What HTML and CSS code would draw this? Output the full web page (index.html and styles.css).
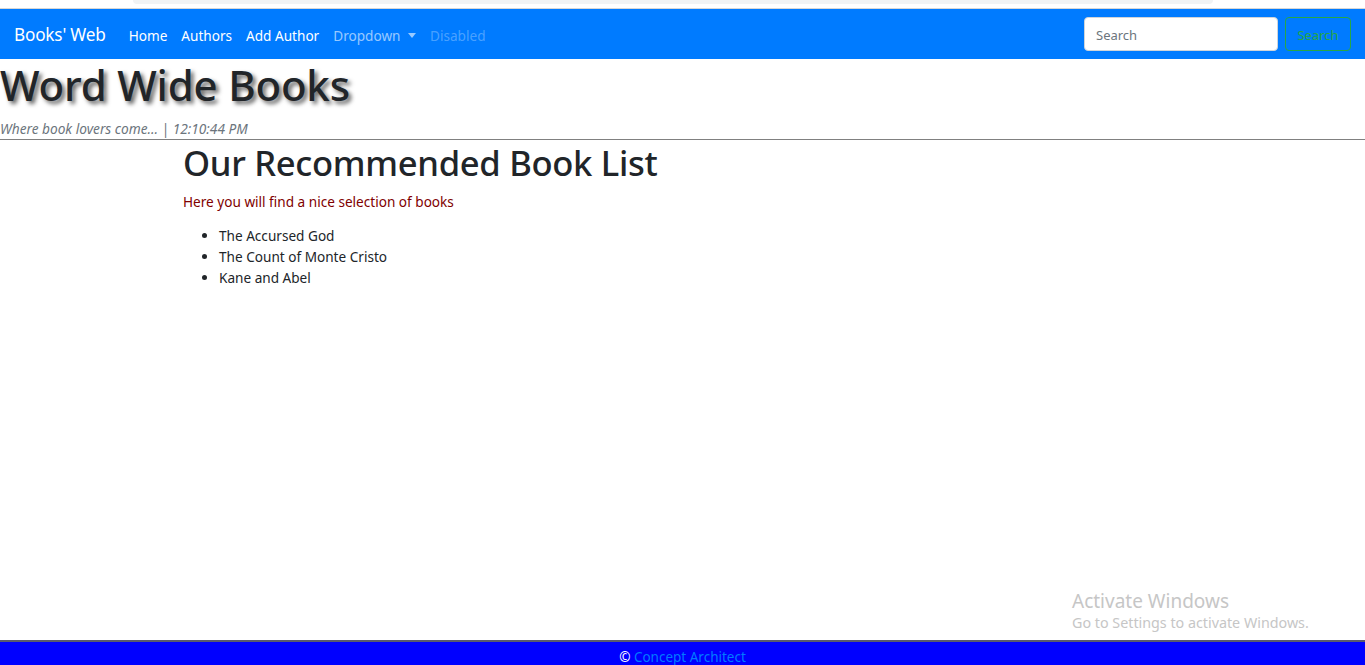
FILE: index.html
```html
<!DOCTYPE html>
<html lang="en">
<head>
<meta charset="utf-8">
<title>Books' Web</title>
<link rel="stylesheet" href="styles.css">
</head>
<body>
<div class="chrome"><div class="chrome-bar"></div></div>
<nav class="navbar">
  <a class="brand" href="#">Books' Web</a>
  <ul class="nav-links">
    <li><a class="nav-link" href="#">Home</a></li>
    <li><a class="nav-link" href="#">Authors</a></li>
    <li><a class="nav-link" href="#">Add Author</a></li>
    <li><a class="nav-link muted" href="#">Dropdown <span class="caret"></span></a></li>
    <li><a class="nav-link disabled" href="#">Disabled</a></li>
  </ul>
  <form class="search">
    <input class="search-input" type="text" placeholder="Search">
    <button class="search-btn" type="button">Search</button>
  </form>
</nav>
<header class="site-header">
  <h1 class="site-title">Word Wide Books</h1>
  <div class="tagline">Where book lovers come... | 12:10:44 PM</div>
</header>
<main class="content">
  <h2 class="page-title">Our Recommended Book List</h2>
  <p class="intro">Here you will find a nice selection of books</p>
  <ul class="books">
    <li>The Accursed God</li>
    <li>The Count of Monte Cristo</li>
    <li>Kane and Abel</li>
  </ul>
</main>
<div class="watermark">
  <div class="wm-title">Activate Windows</div>
  <div class="wm-sub">Go to Settings to activate Windows.</div>
</div>
<footer class="footer">
  <span class="copy">©</span> <a class="footer-link" href="#">Concept Architect</a>
</footer>
</body>
</html>
```
FILE: styles.css
```css
html, body {
  margin: 0;
  padding: 0;
  height: 100%;
}
body {
  font-family: "Noto Sans", "Open Sans", sans-serif;
  color: #212529;
  background: #fff;
  display: flex;
  flex-direction: column;
  min-height: 665px;
  overflow: hidden;
}
.chrome {
  height: 8px;
  background: #fff;
  border-bottom: 1px solid #d6d6d6;
  display: flex;
  justify-content: center;
}
.chrome-bar {
  width: 1080px;
  margin-left: -20px;
  height: 4px;
  background: #f1f3f4;
  border-radius: 0 0 8px 8px;
}
.navbar {
  background: #007bff;
  height: 50px;
  display: flex;
  align-items: center;
  padding: 0 14px;
  box-sizing: border-box;
}
.brand {
  color: #fff;
  text-decoration: none;
  font-size: 17.2px;
  margin-right: 16px;
  padding-top: 1px;
  letter-spacing: -0.2px;
}
.nav-links {
  list-style: none;
  margin: 0;
  padding: 0;
  display: flex;
  flex: 1;
}
.nav-link {
  display: block;
  padding: 2px 7px 0;
  color: #fff;
  text-decoration: none;
  font-size: 13.6px;
}
.nav-link.muted { color: rgba(255,255,255,.6); }
.nav-link.disabled { color: rgba(255,255,255,.3); }
.caret {
  display: inline-block;
  width: 0;
  height: 0;
  margin-left: 4px;
  vertical-align: 3px;
  border-top: 5px solid rgba(255,255,255,.6);
  border-left: 4.5px solid transparent;
  border-right: 4.5px solid transparent;
}
.search {
  display: flex;
  align-items: center;
  gap: 7px;
}
.search-input {
  width: 194px;
  height: 34px;
  box-sizing: border-box;
  border: 1px solid #ced4da;
  border-radius: 4px;
  padding: 2px 11px 0;
  font-family: inherit;
  font-size: 13px;
}
.search-input::placeholder { color: #6c757d; }
.search-btn {
  height: 34px;
  width: 66px;
  box-sizing: border-box;
  background: transparent;
  border: 1px solid #28a745;
  border-radius: 4px;
  color: #28a745;
  font-family: inherit;
  font-size: 13px;
  padding: 2px 0 0;
}
.site-header {
  border-bottom: 1px solid #808080;
}
.site-title {
  margin: 0;
  font-size: 42px;
  font-weight: 500;
  line-height: 52px;
  letter-spacing: -0.2px;
  text-shadow: 3px 3px 4px #666;
}
.tagline {
  font-style: italic;
  color: #6c757d;
  font-size: 13.7px;
  line-height: 20px;
  margin-top: 8px;
}
.content {
  flex: 1;
  padding-left: 183px;
}
.page-title {
  margin: 0;
  font-size: 34.6px;
  font-weight: 500;
  line-height: 45px;
  letter-spacing: -0.3px;
}
.intro {
  margin: 7px 0 13px;
  color: #800000;
  font-size: 13.6px;
  line-height: 20px;
}
.books {
  margin: 0;
  padding-left: 36px;
  font-size: 13.6px;
  line-height: 21px;
}
.watermark {
  position: absolute;
  left: 1072px;
  top: 589px;
  color: #c6c6c6;
}
.wm-title { font-size: 19px; line-height: 24px; }
.wm-sub { font-size: 14.3px; line-height: 20px; }
.footer {
  height: 25px;
  background: #0000ff;
  border-top: 2px solid #5a5a6e;
  text-align: center;
  font-size: 13.5px;
  line-height: 30px;
  box-sizing: border-box;
}
.copy { color: #fff; }
.footer-link { color: #007bff; text-decoration: none; }
```
